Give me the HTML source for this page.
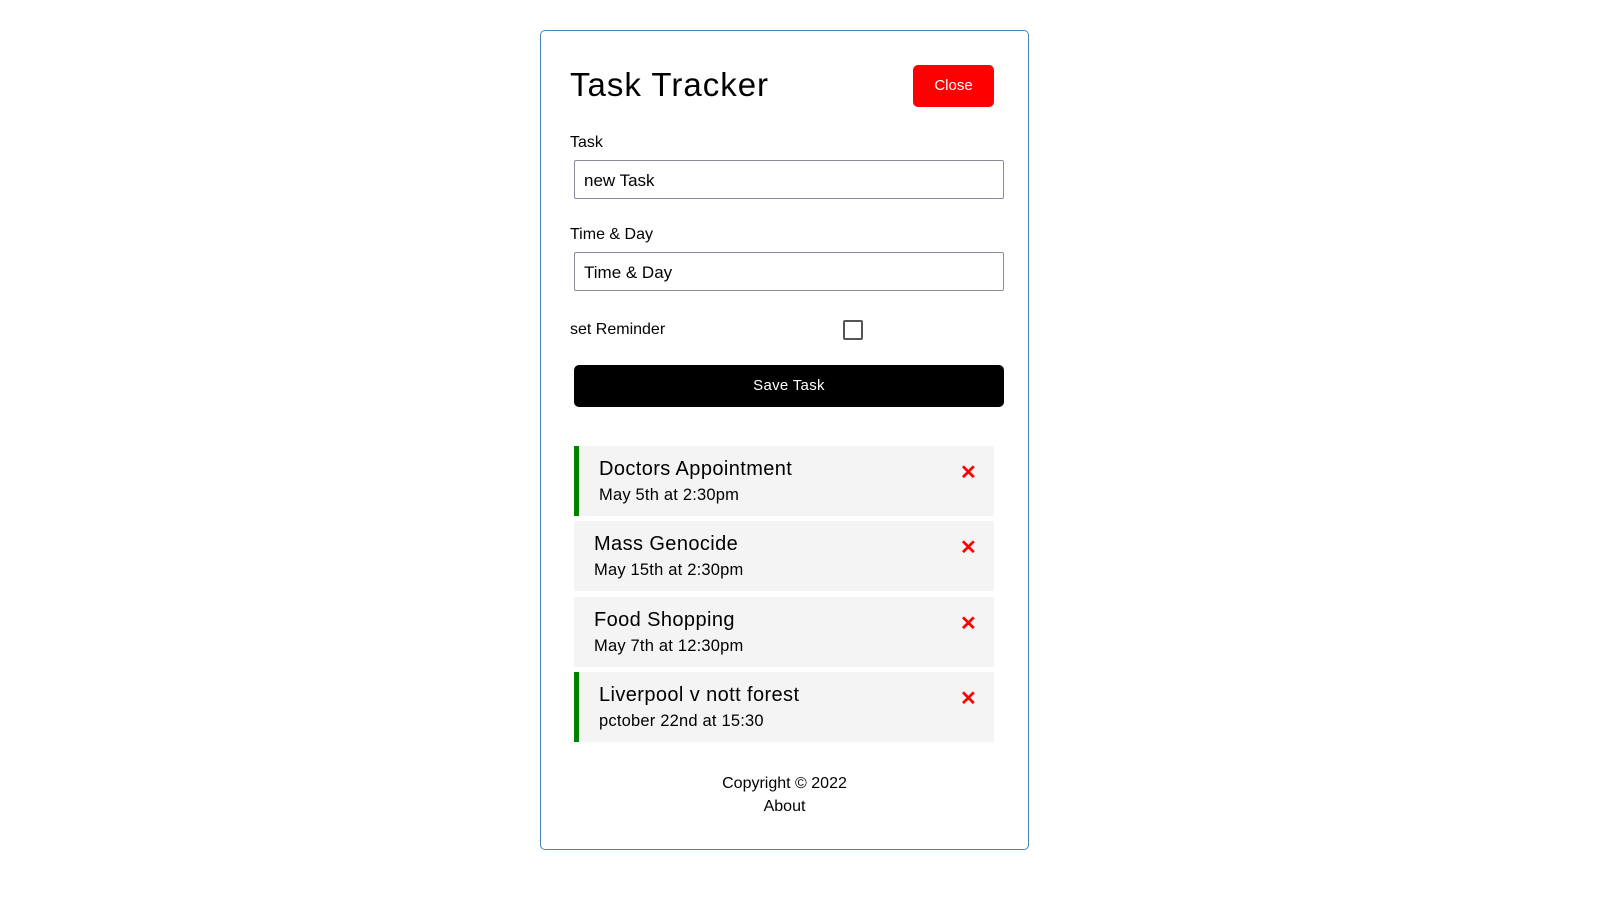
<!DOCTYPE html>
<html><head><meta charset="utf-8"><style>
*{box-sizing:border-box;margin:0;padding:0}
body{width:1600px;height:900px;background:#fff;font-family:"Liberation Sans",sans-serif;color:#000;position:relative;overflow:hidden}
.c{position:absolute;left:540px;top:30px;width:489px;height:820px;border:1px solid steelblue;border-radius:5px}
.a{position:absolute;white-space:nowrap}
.in{position:absolute;left:574px;width:430px;height:39px;border:1px solid #8a8a99;border-radius:2px;font-size:17px;padding:10px 0 0 9px}
.t{position:absolute;left:574px;width:420px;height:70px;background:#f4f4f4}
.t.g{border-left:5px solid green}
.t h3{position:absolute;left:20px;top:12px;font-size:20px;font-weight:normal;letter-spacing:.4px}
.t.g h3,.t.g p{left:20px}
.t p{position:absolute;left:20px;top:40px;font-size:16.5px;letter-spacing:.2px}
.t .x{position:absolute;left:386px;top:14px;color:red;font-size:20px;font-weight:bold}
</style></head><body>
<div class="c"></div>
<div class="a" style="left:570px;top:66px;font-size:33px;letter-spacing:1px">Task Tracker</div>
<div class="a" style="left:913px;top:65px;width:81px;height:42px;background:red;border-radius:5px;color:#fff;font-size:15px;text-align:center;line-height:42px">Close</div>
<div class="a" style="left:570px;top:134px;font-size:16px">Task</div>
<div class="in" style="top:160px">new Task</div>
<div class="a" style="left:570px;top:226px;font-size:16px">Time &amp; Day</div>
<div class="in" style="top:252px">Time &amp; Day</div>
<div class="a" style="left:570px;top:321px;font-size:16px">set Reminder</div>
<div class="a" style="left:843px;top:320px;width:20px;height:20px;border:2px solid #555;border-radius:2px"></div>
<div class="a" style="left:574px;top:365px;width:430px;height:42px;background:#000;border-radius:5px;color:#fff;font-size:15px;text-align:center;line-height:42px;letter-spacing:.3px">Save Task</div>
<div class="t g" style="top:446px"><h3>Doctors Appointment</h3><p>May 5th at 2:30pm</p><span class="x" style="left:381px">✕</span></div>
<div class="t" style="top:521px"><h3>Mass Genocide</h3><p>May 15th at 2:30pm</p><span class="x">✕</span></div>
<div class="t" style="top:597px"><h3>Food Shopping</h3><p>May 7th at 12:30pm</p><span class="x">✕</span></div>
<div class="t g" style="top:672px"><h3>Liverpool v nott forest</h3><p>pctober 22nd at 15:30</p><span class="x" style="left:381px">✕</span></div>
<div class="a" style="left:540px;width:489px;top:775px;text-align:center;font-size:16px">Copyright © 2022</div>
<div class="a" style="left:540px;width:489px;top:798px;text-align:center;font-size:16px">About</div>
</body></html>
